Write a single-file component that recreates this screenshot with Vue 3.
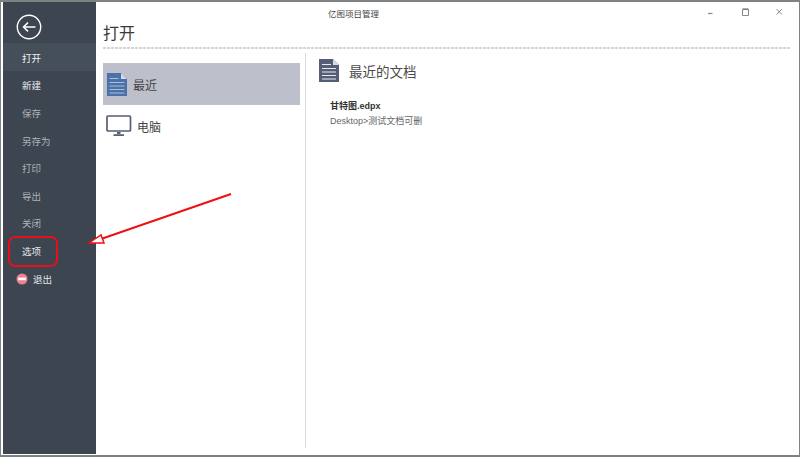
<script setup>
const items = [
  { label: '打开', cls: 'active' },
  { label: '新建', cls: 'bright' },
  { label: '保存', cls: '' },
  { label: '另存为', cls: '' },
  { label: '打印', cls: '' },
  { label: '导出', cls: '' },
  { label: '关闭', cls: '' },
  { label: '选项', cls: 'bright' },
]
</script>

<template>
  <div class="frame">
    <aside class="side">
      <div class="back">
        <svg width="26" height="26" viewBox="0 0 26 26">
          <circle cx="13" cy="13" r="11.7" fill="none" stroke="#fff" stroke-width="1.4" />
          <path d="M19.5 13H7.5M12 8.6 7.5 13l4.5 4.4" fill="none" stroke="#fff" stroke-width="1.5" />
        </svg>
      </div>
      <div v-for="it in items" :key="it.label" class="item" :class="it.cls">{{ it.label }}</div>
      <div class="item exit">
        <svg class="stop" width="12" height="12" viewBox="0 0 12 12">
          <circle cx="6" cy="6" r="5.5" fill="#ee8290" />
          <rect x="2.2" y="4.6" width="7.6" height="2.6" fill="#fff" />
        </svg>
        退出
      </div>
    </aside>

    <main class="main">
      <header class="titlebar">
        <span class="apptitle">亿图项目管理</span>
        <div class="winbtns">
          <svg width="10" height="10" viewBox="0 0 10 10"><path d="M2 6.500h4.500" stroke="#888" stroke-width="1.200" /></svg>
          <svg width="10" height="10" viewBox="0 0 10 10"><path d="M1.500 2.500h6v6h-6z" fill="none" stroke="#888" /><path d="M1.500 2h6" stroke="#777" stroke-width="1.200" /></svg>
          <svg width="10" height="10" viewBox="0 0 10 10"><path d="M.5 2l5.500 5.500M6 2 .5 7.500" stroke="#888" stroke-width="1" /></svg>
        </div>
      </header>
      <h1 class="heading">打开</h1>

      <div class="panes">
        <nav class="places">
          <div class="place selected">
            <svg width="20" height="23" viewBox="0 0 20 23">
              <path d="M0 0h14l6 6v17H0z" fill="#4a72a8" />
              <path d="M14 0l6 6h-6z" fill="#d5dbe6" />
              <path d="M2.500 5.500h9M2.500 9.500h15M2.500 13h15M2.500 16.500h15M2.500 20h15" stroke="#a9bed8" stroke-width="1" />
            </svg>
            <span>最近</span>
          </div>
          <div class="place">
            <svg class="pc" width="26" height="22" viewBox="0 0 26 22">
              <rect x="1" y="1" width="23.500" height="15" rx="1" fill="#fff" stroke="#555e72" stroke-width="1.700" />
              <path d="M11 17h3.500v2H11zM7.500 19.200h10.500V21H7.500z" fill="#555e72" />
            </svg>
            <span>电脑</span>
          </div>
        </nav>

        <section class="recent">
          <div class="recent-head">
            <svg width="20" height="23" viewBox="0 0 20 23">
              <path d="M0 0h14l6 6v17H0z" fill="#555e76" />
              <path d="M14 0l6 6h-6z" fill="#d8dbe2" />
              <path d="M3 5.500h9M3 9.500h14M3 13h14M3 16.500h14M3 20h14" stroke="#e8eaee" stroke-width="1" />
            </svg>
            <span>最近的文档</span>
          </div>
          <div class="file">
            <div class="fname">甘特图.edpx</div>
            <div class="fpath">Desktop&gt;测试文档可删</div>
          </div>
        </section>
      </div>
    </main>

    <div class="callout"></div>
    <svg class="arrow" width="800" height="457" viewBox="0 0 800 457">
      <path d="M231 194 101 239" stroke="#f01010" stroke-width="2" fill="none" />
      <path d="M89 243 101 235 104 243z" fill="#fff" stroke="#f01010" stroke-width="1.500" />
    </svg>
  </div>
</template>

<style>
html, body { margin: 0; background: #fff; }
</style>

<style scoped>
.frame {
  position: relative;
  width: 800px;
  height: 457px;
  box-sizing: border-box;
  display: flex;
  background: #fff;
  border-top: 2px solid #7d8283;
  border-bottom: 2px solid #7d8283;
  border-left: 1px solid #7d8283;
  border-right: 1px solid #7d8283;
  padding: 0 0 1px 2px;
  overflow: hidden;
  font-family: "Liberation Sans", "Noto Sans CJK SC", sans-serif;
}
.side {
  width: 93px;
  flex: none;
  background: #3d4551;
  display: flex;
  flex-direction: column;
  color: #aeb2b7;
  font-size: 9.500px;
}
.back {
  height: 41px;
  padding: 12px 0 0 13px;
  box-sizing: border-box;
}
.item {
  height: 27.600px;
  flex: none;
  display: flex;
  align-items: center;
  padding: 2px 0 0 19px;
  box-sizing: border-box;
}
.item.active {
  background: #444f5a;
  color: #f2f3f4;
}
.item.bright { color: #e6e7e9; }
.item.exit {
  color: #e6e7e9;
  padding-left: 13px;
  gap: 5px;
}
.main {
  flex: 1;
  display: flex;
  flex-direction: column;
  min-width: 0;
}
.titlebar {
  height: 22px;
  flex: none;
  position: relative;
  display: flex;
  align-items: center;
  justify-content: flex-end;
  padding-bottom: 3px;
  box-sizing: border-box;
}
.apptitle {
  position: absolute;
  left: 232px;
  top: 6px;
  font-size: 8.500px;
  line-height: 13px;
  color: #444;
}
.winbtns {
  display: flex;
  gap: 25px;
  padding-right: 13px;
}
.heading {
  margin: 0 8px 0 7px;
  height: 25px;
  box-sizing: border-box;
  font-size: 16px;
  font-weight: 400;
  line-height: 19px;
  color: #3a3a3a;
  background: repeating-linear-gradient(90deg, #d4d4d4 0 3px, transparent 3px 4px) left bottom / 100% 2px no-repeat;
}
.panes {
  flex: 1;
  display: flex;
  padding: 4px 0 6px 7px;
  min-height: 0;
}
.places {
  width: 197px;
  flex: none;
  padding-top: 10px;
  box-sizing: border-box;
}
.place {
  height: 42px;
  display: flex;
  align-items: center;
  gap: 5px;
  padding-left: 3px;
  font-size: 12px;
  color: #444;
}
.place.selected {
  background: #bdc0cb;
  gap: 6px;
  padding-left: 4px;
}
.recent {
  flex: 1;
  margin-left: 5px;
  border-left: 1px solid #dcdcdc;
  padding: 6px 0 0 13px;
}
.recent-head {
  display: flex;
  align-items: center;
  gap: 10px;
  font-size: 13.500px;
  color: #4a4a4a;
}
.file {
  margin: 17px 0 0 11px;
  font-size: 9px;
  line-height: 14px;
}
.fname { font-weight: 700; color: #333; }
.fpath { margin-top: 1px; color: #666; }
.callout {
  position: absolute;
  left: 7px;
  top: 234px;
  width: 46px;
  height: 27px;
  border: 2.500px solid #e5101a;
  border-radius: 7px;
}
.arrow {
  position: absolute;
  left: -1px;
  top: -2px;
  pointer-events: none;
}
</style>
